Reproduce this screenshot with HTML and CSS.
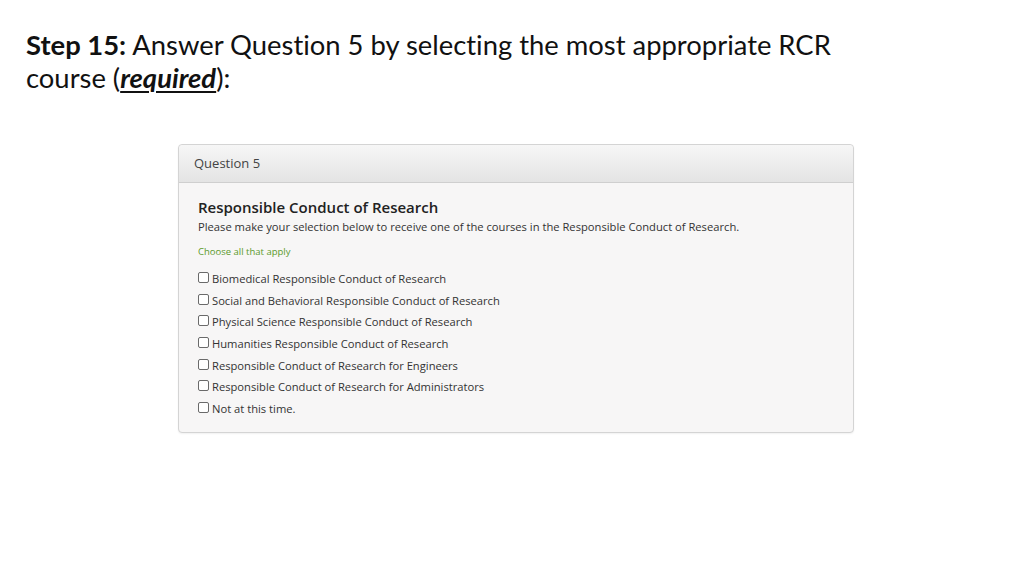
FILE: index.html
```html
<!DOCTYPE html>
<html>
<head>
<meta charset="utf-8">
<link rel="stylesheet" href="styles.css">
</head>
<body>
<h1 class="step"><b>Step 15:</b> Answer Question 5 by selecting the most appropriate RCR course (<b class="req">required</b>):</h1>
<div class="panel">
  <div class="panel-head">Question 5</div>
  <div class="panel-body">
    <div class="q-title">Responsible Conduct of Research</div>
    <div class="q-desc">Please make your selection below to receive one of the courses in the Responsible Conduct of Research.</div>
    <div class="q-hint">Choose all that apply</div>
    <ul class="opts">
      <li><span class="cb"></span>Biomedical Responsible Conduct of Research</li>
      <li><span class="cb"></span>Social and Behavioral Responsible Conduct of Research</li>
      <li><span class="cb"></span>Physical Science Responsible Conduct of Research</li>
      <li><span class="cb"></span>Humanities Responsible Conduct of Research</li>
      <li><span class="cb"></span>Responsible Conduct of Research for Engineers</li>
      <li><span class="cb"></span>Responsible Conduct of Research for Administrators</li>
      <li><span class="cb"></span>Not at this time.</li>
    </ul>
  </div>
</div>
</body>
</html>
```
FILE: styles.css
```css
html, body { margin: 0; padding: 0; background: #fff; }
body { width: 1024px; height: 576px; overflow: hidden; }
.step {
  margin: 28px 0 0 26px;
  width: 880px;
  font-family: "Lato", "Open Sans", sans-serif;
  font-weight: 400;
  font-size: 27.4px;
  line-height: 33px;
  color: #111;
  font-variant-ligatures: none;
}
.step b { font-weight: 700; }
.req { font-style: italic; text-decoration: underline; text-underline-offset: 3px; text-decoration-thickness: 2px; }
.panel {
  margin: 50px 0 0 178px;
  width: 674px;
  border: 1px solid #d4d4d4;
  border-radius: 4px;
  background: #f7f6f6;
  font-family: "Open Sans", sans-serif;
  color: #333;
  box-shadow: 0 1px 2px rgba(0,0,0,0.06);
}
.panel-head {
  height: 37px;
  line-height: 37px;
  padding-left: 15px;
  font-size: 13px;
  color: #444;
  background: linear-gradient(#f6f6f6, #e4e4e4);
  border-bottom: 1px solid #cfcfcf;
  border-radius: 4px 4px 0 0;
}
.panel-body { padding: 13px 19px 9px 19px; }
.q-title { font-size: 15px; font-weight: 600; color: #222; line-height: 22px; }
.q-desc { font-size: 11.2px; line-height: 16px; color: #333; margin-top: 1px; }
.q-hint { font-size: 9.5px; color: #5b9a2c; margin-top: 10px; line-height: 14px; }
.opts { list-style: none; margin: 12px 0 0 0; padding: 0; }
.opts li { font-size: 11.2px; line-height: 16px; height: 21.7px; display: flex; align-items: flex-start; color: #333; }
.cb {
  width: 9px; height: 9px;
  border: 1px solid #6a6a6a;
  border-radius: 2px;
  background: #fff;
  margin: 1px 3px 0 0;
  flex: none;
}
```
